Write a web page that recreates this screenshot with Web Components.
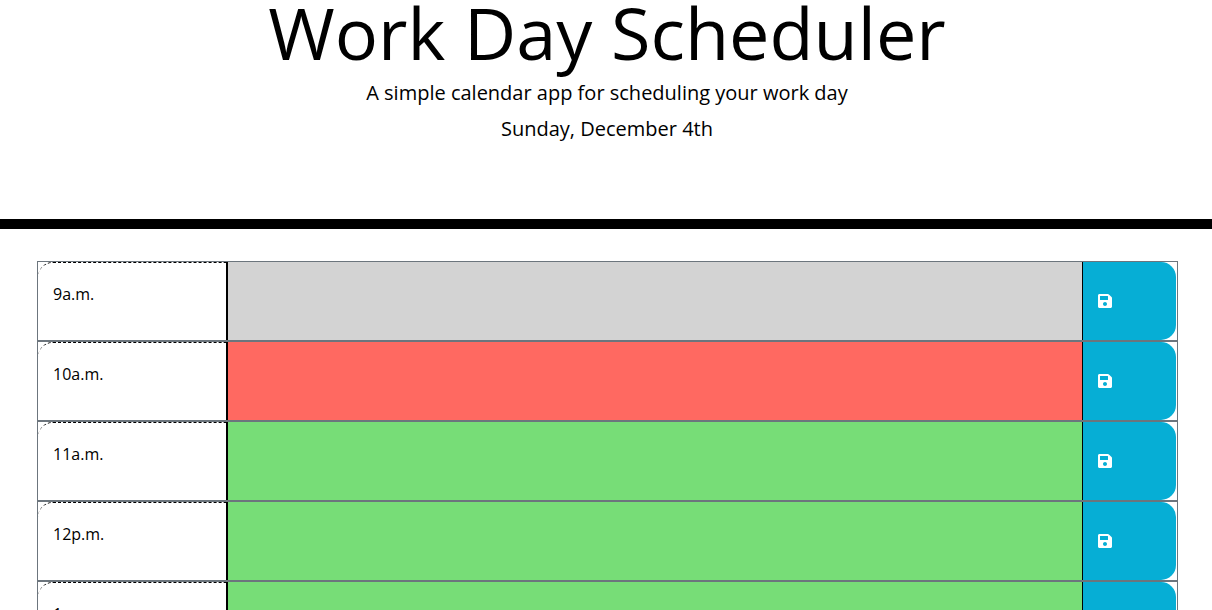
<!DOCTYPE html>
<html lang="en">
<head>
<meta charset="utf-8">
<title>Work Day Scheduler</title>
<style>
  body {
    margin: 0;
    background: #fff;
    color: #000;
    font-family: "Open Sans", sans-serif;
    font-size: 16px;
    line-height: 24px;
  }
</style>
</head>
<body>
<scheduler-header>
  <span slot="title">Work Day Scheduler</span>
  <span slot="lead">A simple calendar app for scheduling your work day</span>
  <span slot="date">Sunday, December 4th</span>
</scheduler-header>
<scheduler-board>
  <time-block phase="past">9a.m.</time-block>
  <time-block phase="present">10a.m.</time-block>
  <time-block phase="future">11a.m.</time-block>
  <time-block phase="future">12p.m.</time-block>
  <time-block phase="future">1p.m.</time-block>
</scheduler-board>

<template id="header-template">
  <style>
    :host { display: block; }
    header {
      padding: 0 0 72px 2px;
      border-bottom: 10px solid #000;
      text-align: center;
    }
    h1, p { margin: 0; font-weight: 400; }
    h1 { font-size: 72px; line-height: 64px; padding-bottom: 11px; }
    p { font-size: 20px; line-height: 36px; }
  </style>
  <header>
    <h1><slot name="title"></slot></h1>
    <p><slot name="lead"></slot></p>
    <p><slot name="date"></slot></p>
  </header>
</template>

<template id="board-template">
  <style>
    :host { display: block; }
    main { padding: 32px 34px 0 37px; }
  </style>
  <main><slot></slot></main>
</template>

<template id="block-template">
  <style>
    :host { display: block; --slot-color: #77dd77; }
    :host([phase="past"]) { --slot-color: #d3d3d3; }
    :host([phase="present"]) { --slot-color: #ff6961; }
    .row {
      box-sizing: border-box;
      height: 80px;
      display: grid;
      grid-template-columns: 189fr 856fr 94fr;
      border: 1px solid #6c757d;
    }
    label {
      padding: 19px 15px;
      border-top: 1px dashed #000;
      border-right: 1px solid #000;
      border-top-left-radius: 15px;
    }
    textarea {
      box-sizing: border-box;
      width: 100%;
      height: 100%;
      margin: 0;
      padding: 8px 15px;
      border: solid #000;
      border-width: 0 1px;
      border-radius: 0;
      outline: none;
      resize: none;
      background: var(--slot-color);
      color: #000;
      font: inherit;
    }
    button {
      display: flex;
      align-items: center;
      margin: 0 1px 0 0;
      padding: 0 15px;
      border: 0;
      border-radius: 0 15px 15px 0;
      background: #06aed5;
      color: #fff;
      cursor: pointer;
    }
    button:hover { color: #000; }
    svg { display: block; width: 14px; height: 16px; }
  </style>
  <div class="row">
    <label for="task"><slot></slot></label>
    <textarea id="task"></textarea>
    <button type="button" aria-label="Save">
      <svg viewBox="0 0 448 512" fill="currentColor" aria-hidden="true"><path d="M433.941 129.941l-83.882-83.882A48 48 0 0 0 316.118 32H48C21.49 32 0 53.49 0 80v352c0 26.51 21.49 48 48 48h352c26.51 0 48-21.49 48-48V163.882a48 48 0 0 0-14.059-33.941zM224 416c-35.346 0-64-28.654-64-64 0-35.346 28.654-64 64-64s64 28.654 64 64c0 35.346-28.654 64-64 64zm96-304.52V212c0 6.627-5.373 12-12 12H76c-6.627 0-12-5.373-12-12V108c0-6.627 5.373-12 12-12h228.520c3.183 0 6.235 1.264 8.485 3.515l3.480 3.480A11.996 11.996 0 0 1 320 111.480z"/></svg>
    </button>
  </div>
</template>

<script>
  const define = (name, templateId) => {
    customElements.define(name, class extends HTMLElement {
      constructor() {
        super();
        this.attachShadow({ mode: "open" })
          .append(document.getElementById(templateId).content.cloneNode(true));
      }
    });
  };
  define("scheduler-header", "header-template");
  define("scheduler-board", "board-template");
  define("time-block", "block-template");
</script>
</body>
</html>
